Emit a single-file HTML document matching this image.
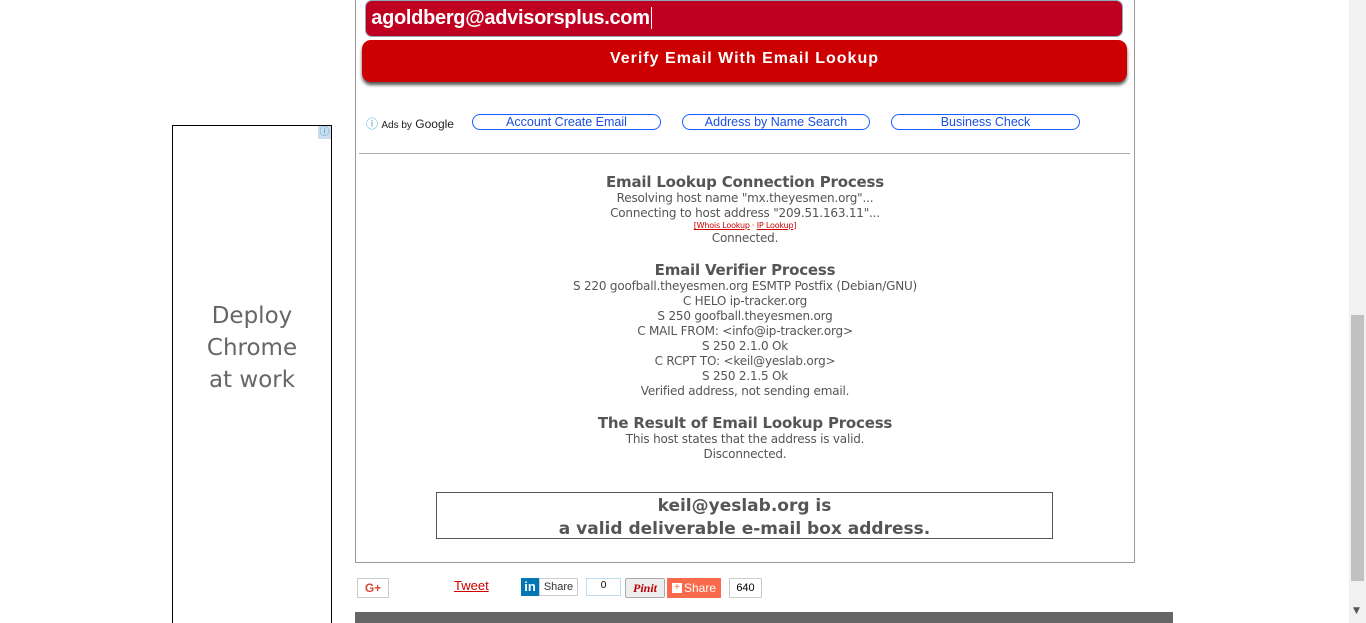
<!DOCTYPE html>
<html style="overflow:hidden"><head><style>
html,body{margin:0;width:1366px;height:623px;overflow:hidden}
body{background:#fff;font-family:"DejaVu Sans","Liberation Sans",sans-serif;position:relative}
.abs{position:absolute}
.c{text-align:center;color:#555;font-size:12px;line-height:15px;letter-spacing:-0.2px}
.h{font-size:15px;font-weight:bold;line-height:18px;color:#555}
.pill{position:absolute;top:114px;height:14px;border:1px solid #1a5cff;border-radius:8px;color:#1a4fe0;font:12.5px "Liberation Sans",sans-serif;text-align:center;line-height:14px}
</style></head><body>
<div class="abs" style="left:1349px;top:0;width:17px;height:623px;background:#f1f1f1"></div>
<div class="abs" style="left:1351px;top:315px;width:13px;height:266px;background:#c1c1c1"></div>
<div class="abs" style="left:1353px;top:606px;font-size:9px;color:#555">▼</div>

<div class="abs" style="left:172px;top:125px;width:158px;height:520px;border:1px solid #000"></div>
<div class="abs" style="left:318px;top:126px;width:13px;height:13px;background:#cde;color:#39c;font-size:10px;text-align:center;line-height:13px">ⓘ</div>
<div class="abs" style="left:173px;top:300px;width:158px;text-align:center;font-size:23px;line-height:32px;color:#666">Deploy<br>Chrome<br>at work</div>

<div class="abs" style="left:355px;top:-5px;width:778px;height:566px;border:1px solid #999"></div>
<div class="abs" style="left:365px;top:0;width:758px;height:37px;background:#c00020;border:1px solid #8ab;border-radius:7px;color:#fff;font:bold 20px 'Liberation Sans',sans-serif;line-height:34px;padding-left:0;box-sizing:border-box;letter-spacing:-0.3px">&nbsp;agoldberg@advisorsplus.com<span style="border-left:1px solid #fff;margin-left:1px"></span></div>
<div class="abs" style="left:362px;top:40px;width:765px;height:42px;background:#cc0000;border-radius:9px;box-shadow:0 3px 3px #555;color:#fff;font:bold 16px 'Liberation Sans',sans-serif;letter-spacing:1px;text-align:center;line-height:38px">Verify Email With Email Lookup</div>

<div class="abs" style="left:366px;top:115px;font:12px 'Liberation Sans',sans-serif;color:#222"><span style="color:#2aa3c8">ⓘ</span> <span style="font-size:10px">Ads by</span> Google</div>
<div class="pill" style="left:472px;width:187px">Account Create Email</div>
<div class="pill" style="left:682px;width:186px">Address by Name Search</div>
<div class="pill" style="left:891px;width:187px">Business Check</div>
<div class="abs" style="left:359px;top:153px;width:771px;height:1px;background:#aaa"></div>

<div class="abs c" style="left:356px;width:778px;top:173px">
<div class="h">Email Lookup Connection Process</div>
Resolving host name "mx.theyesmen.org"...<br>
Connecting to host address "209.51.163.11"...<br>
<div style="font-size:8px;line-height:10px;color:#c00"><u>[Whois Lookup</u> · <u>IP Lookup</u>]</div>
Connected.
<div class="h" style="margin-top:15px">Email Verifier Process</div>
S 220 goofball.theyesmen.org ESMTP Postfix (Debian/GNU)<br>
C HELO ip-tracker.org<br>
S 250 goofball.theyesmen.org<br>
C MAIL FROM: &lt;info@ip-tracker.org&gt;<br>
S 250 2.1.0 Ok<br>
C RCPT TO: &lt;keil@yeslab.org&gt;<br>
S 250 2.1.5 Ok<br>
Verified address, not sending email.
<div class="h" style="margin-top:15px">The Result of Email Lookup Process</div>
This host states that the address is valid.<br>
Disconnected.
</div>
<div class="abs" style="left:436px;top:492px;width:617px;height:47px;border:1px solid #555;text-align:center;color:#555;font-weight:bold;font-size:17px;line-height:23px;padding-top:2px;box-sizing:border-box">keil@yeslab.org is<br>a valid deliverable e-mail box address.</div>

<div class="abs" style="left:357px;top:578px;width:30px;height:18px;border:1px solid #ccc;color:#d34836;font:bold 12px 'Liberation Sans';text-align:center;line-height:18px">G+</div>
<div class="abs" style="left:454px;top:578px;color:#c00;font:13px 'Liberation Sans';text-decoration:underline">Tweet</div>
<div class="abs" style="left:521px;top:578px;width:18px;height:18px;background:#0077b5;color:#fff;font:bold 13px 'Liberation Sans';text-align:center;line-height:18px">in</div>
<div class="abs" style="left:539px;top:578px;width:37px;height:16px;border:1px solid #ccc;font:11px 'Liberation Sans';text-align:center;line-height:16px;color:#333">Share</div>
<div class="abs" style="left:586px;top:578px;width:33px;height:16px;border:1px solid #bde;font:10px 'Liberation Sans';text-align:center;line-height:14px">0</div>
<div class="abs" style="left:625px;top:578px;width:38px;height:18px;border:1px solid #aaa;background:#eee;color:#b00;font:italic bold 12px 'Liberation Serif';text-align:center;line-height:18px;border-radius:2px">Pinit</div>
<div class="abs" style="left:667px;top:578px;width:54px;height:20px;background:#f96a4a;color:#fff;font:12px 'Liberation Sans';line-height:20px;text-align:right;padding-right:5px;box-sizing:border-box"><span style="position:absolute;left:5px;top:5px;width:10px;height:10px;background:#fff;color:#f96a4a;font-size:10px;line-height:10px;text-align:center">+</span>Share</div>
<div class="abs" style="left:729px;top:578px;width:31px;height:18px;border:1px solid #ccc;font:11px 'Liberation Sans';text-align:center;line-height:18px">640</div>
<div class="abs" style="left:355px;top:612px;width:818px;height:11px;background:#666"></div>
</body></html>
